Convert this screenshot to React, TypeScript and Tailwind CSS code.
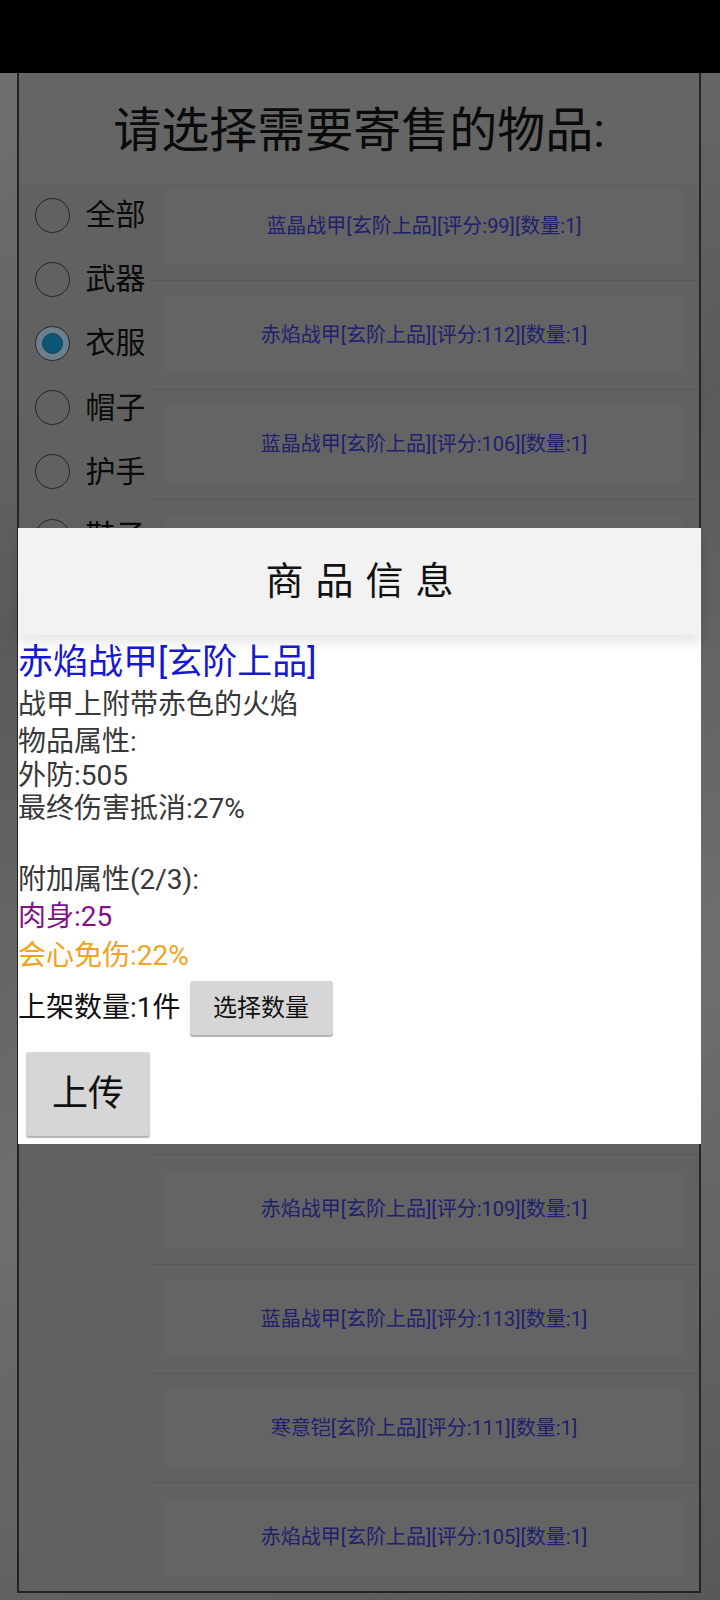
const categories = [
  { label: '全部', checked: false },
  { label: '武器', checked: false },
  { label: '衣服', checked: true },
  { label: '帽子', checked: false },
  { label: '护手', checked: false },
  { label: '鞋子', checked: false },
  { label: '饰品', checked: false },
  { label: '其他', checked: false },
];

const items = [
  '蓝晶战甲[玄阶上品][评分:99][数量:1]',
  '赤焰战甲[玄阶上品][评分:112][数量:1]',
  '蓝晶战甲[玄阶上品][评分:106][数量:1]',
  '寒意铠[玄阶上品][评分:102][数量:1]',
  '赤焰战甲[玄阶上品][评分:98][数量:1]',
  '蓝晶战甲[玄阶上品][评分:104][数量:1]',
  '寒意铠[玄阶上品][评分:107][数量:1]',
  '赤焰战甲[玄阶上品][评分:110][数量:1]',
  '蓝晶战甲[玄阶上品][评分:101][数量:1]',
  '赤焰战甲[玄阶上品][评分:109][数量:1]',
  '蓝晶战甲[玄阶上品][评分:113][数量:1]',
  '寒意铠[玄阶上品][评分:111][数量:1]',
  '赤焰战甲[玄阶上品][评分:105][数量:1]',
];

function Radio({ checked }: { checked: boolean }) {
  if (checked) {
    return (
      <div className="flex h-[35px] w-[35px] shrink-0 items-center justify-center rounded-full border-[1.5px] border-[#262626] bg-[#6c7f8c]">
        <div className="h-[21px] w-[21px] rounded-full border border-[#14404f] bg-[#0b5676]" />
      </div>
    );
  }
  return <div className="h-[35px] w-[35px] shrink-0 rounded-full border-[1.5px] border-[#262626]" />;
}

export default function App() {
  return (
    <div className="relative h-[1600px] w-[720px] overflow-hidden bg-[linear-gradient(160deg,#727272,#5a5a5a_35%,#6e6e6e_65%,#585858)] font-['Roboto','Noto_Sans_CJK_SC',sans-serif]">
      {/* status bar */}
      <div className="h-[73px] bg-black" />

      {/* underlying sell dialog (dimmed) */}
      <div className="ml-[17px] flex h-[1520px] w-[684px] flex-col overflow-hidden border-x-2 border-b-2 border-[#242424] bg-[#616161]">
        <div className="flex h-[110px] shrink-0 items-center justify-center bg-[#656565] pt-[6px] text-[48px] leading-[56px] text-[#0a0a0a]">
          请选择需要寄售的物品:
        </div>

        <div className="flex min-h-0 flex-1">
          {/* category radios */}
          <div className="flex w-[132px] shrink-0 flex-col">
            {categories.map((c) => (
              <div key={c.label} className="flex h-[64.2px] shrink-0 items-center gap-[16px] pl-[15.5px]">
                <Radio checked={c.checked} />
                <span className="text-[30px] leading-none text-[#0a0a0a]">{c.label}</span>
              </div>
            ))}
          </div>

          {/* item list */}
          <div className="min-w-0 flex-1 overflow-hidden">
            <div className="-mt-[12.3px] flex flex-col">
              {items.map((it, i) => (
                <div key={i} className="h-[109.3px] shrink-0 border-t border-[#575757] pt-[15px]">
                  <div className="ml-[12px] mr-[14px] flex h-[78px] items-center justify-center rounded-[8px] bg-[#646464] text-[20px] text-[#20206e]">
                    {it}
                  </div>
                </div>
              ))}
            </div>
          </div>
        </div>
      </div>

      {/* item info modal */}
      <div className="absolute left-[18px] top-[528px] w-[683px] bg-white">
        <div className="relative z-10 flex h-[107px] items-center justify-center bg-[#f2f2f2] pl-[12px] text-[38px] tracking-[12px] text-[#111] shadow-[0_6px_14px_rgba(0,0,0,0.12)]">
          商品信息
        </div>
        <div className="flex flex-col pb-[8px] pt-[6px]">
          <div className="h-[44px] text-[35px] leading-[44px] text-[#1818d0]">赤焰战甲[玄阶上品]</div>
          <div className="h-[39px] text-[28px] leading-[39px] text-[#383838]">战甲上附带赤色的火焰</div>
          <div className="h-[36px] text-[28px] leading-[36px] text-[#383838]">物品属性:</div>
          <div className="h-[32px] text-[28px] leading-[32px] text-[#383838]">外防:505</div>
          <div className="h-[33px] text-[28px] leading-[33px] text-[#383838]">最终伤害抵消:27%</div>
          <div className="h-[37px]" />
          <div className="h-[36px] text-[28px] leading-[36px] text-[#383838]">附加属性(2/3):</div>
          <div className="h-[38px] text-[28px] leading-[38px] text-[#861086]">肉身:25</div>
          <div className="h-[40px] text-[28px] leading-[40px] text-[#f2a31b]">会心免伤:22%</div>
          <div className="flex items-center pt-[5px]">
            <span className="text-[28px] leading-none text-[#111]">上架数量:1件</span>
            <button className="ml-[9px] flex h-[54px] w-[143px] items-center justify-center rounded-[3px] bg-[#d6d6d6] text-[24px] text-[#111] shadow-[0_2px_1px_rgba(0,0,0,0.3)]">
              选择数量
            </button>
          </div>
          <button className="ml-[8px] mt-[17px] flex h-[84px] w-[124px] items-center justify-center rounded-[3px] bg-[#d6d6d6] text-[36px] text-[#111] shadow-[0_2px_1px_rgba(0,0,0,0.3)]">
            上传
          </button>
        </div>
      </div>
    </div>
  );
}
